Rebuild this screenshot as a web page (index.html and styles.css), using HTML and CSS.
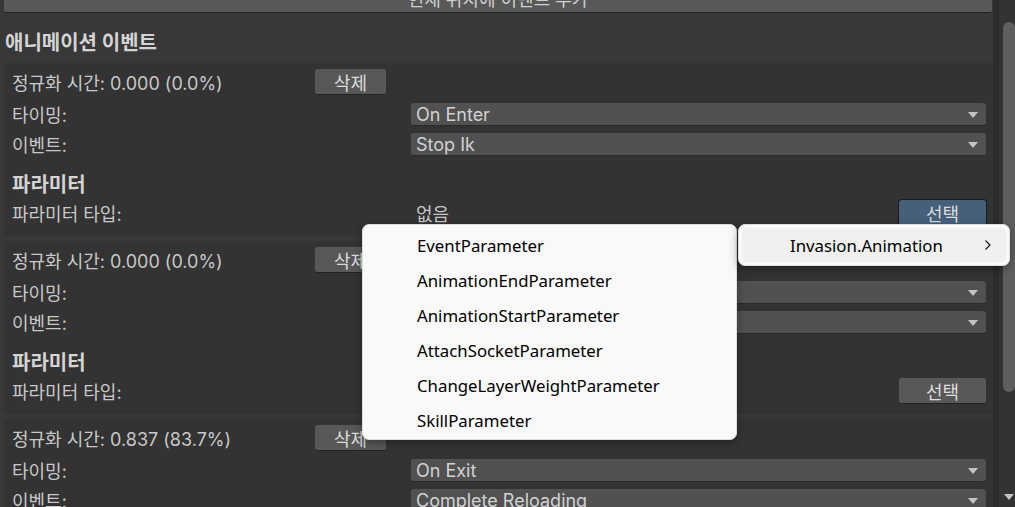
FILE: index.html
```html
<!DOCTYPE html>
<html lang="ko">
<head>
    <meta charset="UTF-8">
    <title>Animation Events</title>
    <link rel="stylesheet" href="styles.css">
</head>
<body>
<div class="inspector">
    <div class="main">
        <button class="add-btn">현재 위치에 이벤트 추가</button>
        <div class="section-title">애니메이션 이벤트</div>

        <!-- event 1 -->
        <div class="event-box">
            <div class="row first">
                <span class="label time-label">정규화 시간: 0.000 (0.0%)</span>
                <button class="btn del-btn">삭제</button>
            </div>
            <div class="row">
                <span class="label field-label">타이밍:</span>
                <div class="dropdown">On Enter</div>
            </div>
            <div class="row">
                <span class="label field-label">이벤트:</span>
                <div class="dropdown">Stop Ik</div>
            </div>
            <div class="param-title">파라미터</div>
            <div class="row">
                <span class="label field-label">파라미터 타입:</span>
                <span class="value">없음</span>
                <button class="btn pick-btn active">선택</button>
            </div>
        </div>

        <!-- event 2 -->
        <div class="event-box">
            <div class="row first">
                <span class="label time-label">정규화 시간: 0.000 (0.0%)</span>
                <button class="btn del-btn">삭제</button>
            </div>
            <div class="row">
                <span class="label field-label">타이밍:</span>
                <div class="dropdown">On Enter</div>
            </div>
            <div class="row">
                <span class="label field-label">이벤트:</span>
                <div class="dropdown">Stop Ik</div>
            </div>
            <div class="param-title">파라미터</div>
            <div class="row">
                <span class="label field-label">파라미터 타입:</span>
                <span class="value">없음</span>
                <button class="btn pick-btn">선택</button>
            </div>
        </div>

        <!-- event 3 -->
        <div class="event-box">
            <div class="row first">
                <span class="label time-label">정규화 시간: 0.837 (83.7%)</span>
                <button class="btn del-btn">삭제</button>
            </div>
            <div class="row">
                <span class="label field-label">타이밍:</span>
                <div class="dropdown">On Exit</div>
            </div>
            <div class="row">
                <span class="label field-label">이벤트:</span>
                <div class="dropdown">Complete Reloading</div>
            </div>
        </div>
    </div>

    <div class="scrollbar">
        <div class="thumb"></div>
        <div class="arrow-down"></div>
    </div>
</div>

<!-- type picker popup -->
<div class="menu">
    <div class="menu-item">EventParameter</div>
    <div class="menu-item">AnimationEndParameter</div>
    <div class="menu-item">AnimationStartParameter</div>
    <div class="menu-item">AttachSocketParameter</div>
    <div class="menu-item">ChangeLayerWeightParameter</div>
    <div class="menu-item">SkillParameter</div>
</div>
<div class="submenu">
    <div class="submenu-item">
        <span>Invasion.Animation</span>
        <svg class="chevron" width="8" height="12" viewBox="0 0 8 12">
            <path d="M1.5 1.5 L6 6 L1.5 10.5" fill="none" stroke="#1a1a1a" stroke-width="1.2"/>
        </svg>
    </div>
</div>
</body>
</html>
```

FILE: styles.css
```css
body {
    margin: 0;
    width: 1015px;
    height: 507px;
    overflow: hidden;
    background-color: #383838;
    font-family: Inter, "Noto Sans CJK KR", sans-serif;
    font-size: 18px;
    color: #c8c8c8;
}
.inspector {
    display: flex;
    height: 507px;
}
.main {
    width: 989px;
    margin-left: 4px;
}
.add-btn {
    display: block;
    width: 988px;
    height: 25px;
    margin-top: -12px;
    padding: 0;
    background-color: #585858;
    border: none;
    border-bottom: 1px solid #232323;
    border-radius: 3px;
    color: #d0d0d0;
    font-family: inherit;
    font-size: 18px;
    line-height: 24px;
}
.section-title {
    height: 26px;
    line-height: 26px;
    margin: 17px 0 7px 1px;
    font-weight: bold;
    font-size: 20px;
    color: #d4d4d4;
}
.event-box {
    background-color: #333333;
    padding: 4px 7px 8px 8px;
    margin-bottom: 5px;
}
.row {
    display: flex;
    align-items: center;
    height: 30px;
}
.row.first {
    margin-bottom: 2px;
}
.label {
    white-space: nowrap;
}
.time-label {
    width: 303px;
}
.field-label {
    width: 399px;
}
.btn {
    height: 26px;
    padding: 0;
    background-color: #585858;
    border: none;
    border-bottom: 1px solid #232323;
    border-radius: 3px;
    color: #dcdcdc;
    font-family: inherit;
    font-size: 18px;
}
.del-btn {
    width: 71px;
}
.pick-btn {
    width: 87px;
}
.pick-btn.active {
    background-color: #46607c;
    box-shadow: 0 0 0 1px #1c1c1c;
}
.value {
    flex: 1;
    padding-left: 5px;
}
.dropdown {
    flex: 1;
    height: 23px;
    line-height: 23px;
    padding-left: 5px;
    background-color: #515151;
    border-bottom: 1px solid #2a2a2a;
    border-radius: 3px;
    box-sizing: border-box;
    color: #d2d2d2;
    position: relative;
}
.dropdown::after {
    content: "";
    position: absolute;
    right: 8px;
    top: 9px;
    border-left: 5px solid transparent;
    border-right: 5px solid transparent;
    border-top: 6px solid #c4c4c4;
}
.param-title {
    height: 26px;
    line-height: 26px;
    margin-top: 13px;
    font-weight: bold;
    font-size: 20px;
    color: #d4d4d4;
}
.scrollbar {
    width: 16px;
    border-left: 6px solid #2c2c2c;
    background-color: #333333;
    position: relative;
}
.thumb {
    width: 12px;
    height: 370px;
    margin: 22px 0 0 4px;
    background-color: #5f5f5f;
    border-radius: 6px;
}
.arrow-down {
    position: absolute;
    left: 5px;
    bottom: 7px;
    border-left: 5px solid transparent;
    border-right: 5px solid transparent;
    border-top: 6px solid #c4c4c4;
}

/* popup */
.menu {
    position: absolute;
    left: 362px;
    top: 224px;
    width: 375px;
    padding: 3px 0 1px;
    background-color: #f9f9f9;
    border: 1px solid #dedede;
    border-radius: 7px;
    box-sizing: border-box;
    box-shadow: 0 3px 10px rgba(0, 0, 0, 0.35);
    font-family: "Noto Sans", sans-serif;
    font-size: 16.8px;
    color: #000;
}
.menu-item {
    height: 35px;
    line-height: 35px;
    padding-left: 54px;
}
.submenu {
    position: absolute;
    left: 738px;
    top: 224px;
    width: 272px;
    height: 42px;
    padding: 3px;
    background-color: #f9f9f9;
    border: 1px solid #dedede;
    border-radius: 7px;
    box-sizing: border-box;
    box-shadow: 0 3px 10px rgba(0, 0, 0, 0.35);
    font-family: "Noto Sans", sans-serif;
    font-size: 16.8px;
    color: #000;
}
.submenu-item {
    display: flex;
    align-items: center;
    height: 34px;
    padding-left: 48px;
    background-color: #f0f0f0;
    border-radius: 4px;
}
.chevron {
    margin-left: auto;
    margin-right: 14px;
}
```
